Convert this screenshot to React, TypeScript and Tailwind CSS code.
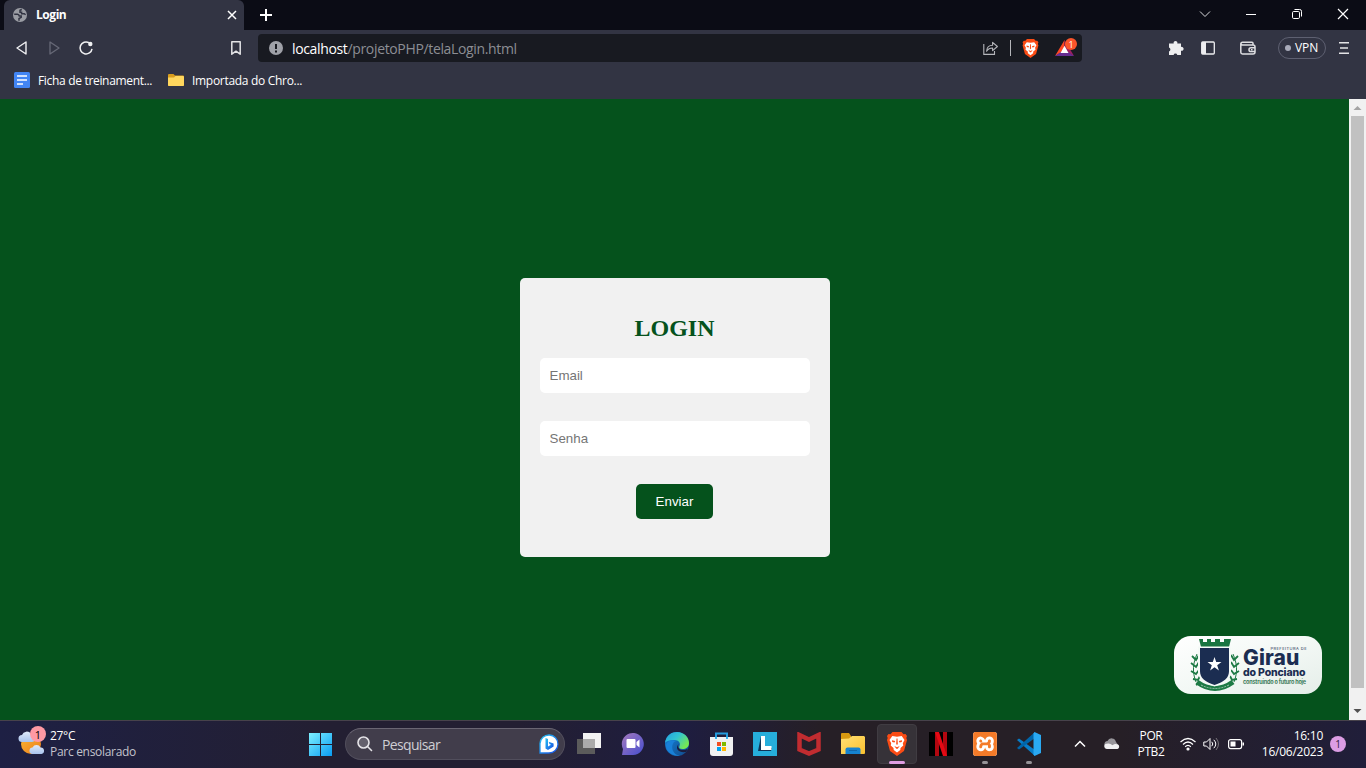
import React from "react";
import { SiXampp } from "react-icons/si";

type BoxProps = { children?: React.ReactNode; className?: string };

function Slot({ children, className = "" }: BoxProps) {
  return (
    <div className={`relative flex h-10 w-10 shrink-0 items-center justify-center ${className}`}>{children}</div>
  );
}

function BraveLogo({ className }: { className: string }) {
  return (
    <svg viewBox="0 0 24 24" className={`shrink-0 ${className}`}>
      <path d="M7.500 0h9l2 2.200 2-.1L22 4l-.7 2.100.7 2-3 11L12 24l-7-4.900-3-11 .7-2L2 4l1.500-1.900 2 .1z" fill="#fb4c15" />
      <path d="M7.300 4l4.700.7 4.700-.7 2.800 4-1.700 3.200.5 2.300-2.800 2.400-.2 2L12 20.500l-3.300-2.600-.2-2-2.800-2.400.5-2.300L4.500 8z" fill="#fff" />
      <path d="M7 8.300l3.200.8-.7 1.500-2.300-.6zM17 8.300l-3.200.8.7 1.500 2.300-.6zM11.500 6.500h1l.3 5.500-.8 1-.8-1zM9.300 14l2.700 1.300 2.700-1.300-2 2.700h-1.400z" fill="#fb4c15" />
    </svg>
  );
}

function TabStrip() {
  return (
    <div className="flex h-[30px] bg-[#0b0c15] pl-1">
      <div className="flex h-[30px] w-60 items-center rounded-t-md bg-[#323443] pl-[9px]">
        <svg className="h-[14px] w-[14px]" viewBox="0 0 14 14">
          <circle cx="7" cy="7" r="7" fill="#9a9ca3" />
          <path d="M1.200 6.300h3.200q1.600.2 1.900 1.700h1.900v1.300L6 10.500v2.200M8.800 1.500L7 2.300v2h1.600v1.400h2.700l1.300 1.100" fill="none" stroke="#323443" strokeWidth="1.500" />
        </svg>
        <span className="ml-[9px] w-[186px] text-xs font-bold tracking-[-0.45px] text-white">Login</span>
        <svg className="ml-1 h-5 w-3" viewBox="0 0 12 20">
          <path d="M2 6l8 8M10 6l-8 8" stroke="#fff" strokeWidth="1.5" />
        </svg>
      </div>
      <svg className="ml-[15px] h-[30px] w-[14px]" viewBox="0 0 14 30">
        <path d="M7 9v12M1 15h12" stroke="#fff" strokeWidth="2" />
      </svg>
      <div className="ml-auto flex">
        <svg className="h-[30px] w-[46px]" viewBox="0 0 46 30" fill="none" stroke="#d9d9dc">
          <path d="M18 11.500l5 5 5-5" />
        </svg>
        <svg className="h-[30px] w-[46px]" viewBox="0 0 46 30" stroke="#fff">
          <path d="M18 14.500h10" />
        </svg>
        <svg className="h-[30px] w-[46px]" viewBox="0 0 46 30" fill="none" stroke="#fff">
          <rect x="18.500" y="11.500" width="7" height="7" rx="1.200" />
          <path d="M20.500 9.500h5.200q1.800 0 1.800 1.800v5.200" />
        </svg>
        <svg className="h-[30px] w-[46px]" viewBox="0 0 46 30" stroke="#fff" strokeWidth="1.200">
          <path d="M18 9l10 10M28 9l-10 10" />
        </svg>
      </div>
    </div>
  );
}

function Toolbar() {
  return (
    <div className="flex h-9 items-center bg-[#323443] pl-[14px]">
      <svg className="h-4 w-4" viewBox="0 0 16 16" fill="none" stroke="#f0f0f2" strokeWidth="1.4" strokeLinejoin="round">
        <path d="M3 8l9-6v12z" />
      </svg>
      <svg className="ml-4 h-4 w-4" viewBox="0 0 16 16" fill="none" stroke="#676977" strokeWidth="1.3" strokeLinejoin="round">
        <path d="M13 8L4 2v12z" />
      </svg>
      <svg className="ml-4 h-4 w-4" viewBox="0 0 16 16" fill="none" stroke="#f0f0f2" strokeWidth="1.5">
        <path d="M11 2.700A6 6 0 1 0 14 8.800" />
        <circle cx="12.300" cy="4" r="2.200" fill="#f0f0f2" stroke="none" />
      </svg>
      <svg className="ml-[134px] h-4 w-4" viewBox="0 0 16 16" fill="none" stroke="#e3e3e6" strokeWidth="1.5" strokeLinejoin="round">
        <path d="M3.800 1.800h8.400v12.400L8 11.200l-4.200 3z" />
      </svg>
      <div className="ml-[14px] flex h-7 w-[824px] items-center rounded bg-[#181a21] pl-[11px]">
        <svg className="h-[14px] w-[14px]" viewBox="0 0 14 14">
          <circle cx="7" cy="7" r="7" fill="#9fa1a8" />
          <path d="M7 3v5M7 9.500v2" stroke="#181a21" strokeWidth="2" />
        </svg>
        <div className="ml-[9px] w-[691px] whitespace-nowrap text-[14px] tracking-[-0.35px] text-[#8c8e94]">
          <span className="text-white">localhost</span>/projetoPHP/telaLogin.html
        </div>
        <svg className="h-4 w-4" viewBox="0 0 16 16" fill="none" stroke="#b5b6bb" strokeWidth="1.100">
          <path d="M.8 4v10.400h10.700V11" />
          <path d="M3.600 11.200c.2-4 2.500-6 6-6V2.300l4.800 4.200-4.800 4.200V8C7 8 5 9 3.600 11.200z" strokeLinejoin="round" />
        </svg>
        <div className="ml-[11px] h-4 w-px bg-[#b5b6bb]" />
        <BraveLogo className="ml-[10px] h-[19px] w-[19px]" />
        <div className="relative ml-[15px] h-5 w-6">
          <svg className="mt-px h-[18px] w-[19px]" viewBox="0 0 19 18">
            <path d="M9.500 1L0 17l9.500-5.500z" fill="#ff4724" />
            <path d="M9.500 1L19 17l-9.500-5.500z" fill="#9e1f63" />
            <path d="M0 17h19l-9.500-6.500z" fill="#662d91" />
            <path d="M9.500 6.800l4 7.200h-8z" fill="#fff" />
          </svg>
          <div className="absolute left-[10px] top-0 flex h-3 w-3 items-center justify-center rounded-full bg-[#fb542b] text-[9px] leading-none text-white">1</div>
        </div>
      </div>
      <svg className="ml-[86px] h-4 w-4" viewBox="0 0 16 16">
        <path d="M2 3.500h3.700a1.900 1.900 0 1 1 3.600 0H13v3.400a2 2 0 1 1 0 3.800V15H9.300a1.900 1.900 0 0 0-3.700 0H1v-3.600a2 2 0 0 0 0-3.800V3.500z" fill="#eeeef0" />
      </svg>
      <svg className="ml-4 h-4 w-4" viewBox="0 0 16 16">
        <rect x="1.700" y="2" width="12.600" height="12" rx="1" fill="none" stroke="#ededf0" strokeWidth="1.300" />
        <path d="M2 2h4v12H2z" fill="#ededf0" />
      </svg>
      <svg className="ml-[24px] h-4 w-4" viewBox="0 0 16 16" fill="none" stroke="#dedee2" strokeWidth="1.500">
        <path d="M13 5V3.300q0-1-1-1H2.500Q.8 2.300.8 4v8.300q0 1.700 1.700 1.700H13q2 0 2-2V7q0-2-2-2H2.500Q1 5 1 3.500" />
        <path d="M15 7.800h-4q-2 0-2 1.900t2 1.900h4" />
        <path d="M11 9.700h1.500" />
      </svg>
      <div className="ml-[22px] flex h-[22px] w-12 items-center rounded-full border border-[#5e6071] pl-[6px]">
        <div className="h-[6px] w-[6px] shrink-0 rounded-full bg-[#a9abba]" />
        <span className="ml-1 text-xs tracking-[-0.1px] text-white">VPN</span>
      </div>
      <svg className="ml-[13px] h-4 w-[10px]" viewBox="0 0 10 16" stroke="#e3e3e6" strokeWidth="1.500">
        <path d="M0 2.750h10M1 8h8M0 13.250h10" />
      </svg>
    </div>
  );
}

function Bookmarks() {
  return (
    <div className="flex h-[33px] items-center bg-[#323443] pb-[5px] pl-[14px] text-xs text-white">
      <svg className="h-4 w-4" viewBox="0 0 16 16">
        <rect width="16" height="16" rx="1.500" fill="#4285f4" />
        <path d="M3 4h10M3 8h10M3 12h6" stroke="#fff" strokeWidth="1.700" />
      </svg>
      <span className="ml-2 w-[130px] whitespace-nowrap pt-px tracking-[-0.32px]">Ficha de treinament...</span>
      <svg className="h-4 w-4" viewBox="0 0 16 16">
        <path d="M0 3q0-1 1-1h4.500L7 3.500h8q1 0 1 1V13q0 1-1 1H1q-1 0-1-1z" fill="#d99d1d" />
        <path d="M0 5.500h6L7.500 4H15q1 0 1 1v8q0 1-1 1H1q-1 0-1-1z" fill="#ffd75e" />
      </svg>
      <span className="ml-2 whitespace-nowrap pt-px tracking-[-0.3px]">Importada do Chro...</span>
    </div>
  );
}

function CityLogo() {
  return (
    <div className="absolute bottom-[26px] right-[27px] flex h-[58px] w-[148px] overflow-hidden rounded-[17px] bg-linear-to-br from-white via-[#f3f8f5] to-[#e5eee9]">
      <svg className="ml-[16px] mt-[2px] h-[54px] w-[50px] shrink-0" viewBox="0 0 50 54">
        <g fill="none" stroke="#1d7a45" strokeWidth="1.700">
          <path d="M6 44C2 34 3 25 7 16M44 44c4-10 3-19-1-28" strokeWidth="1" />
          <path d="M2 18l4 4 3-5M1 25l5 4 3-5M1 33l5 3 3-4M3 41l5 1 2-4M6 47l4-2M48 18l-4 4-3-5M49 25l-5 4-3-5M49 33l-5 3-3-4M47 41l-5 1-2-4" strokeWidth="1.800" />
          <path d="M7 44q18 13 36 0" strokeWidth="5" />
          <path d="M11 47q14 7 28 0" stroke="#b8d4c3" strokeWidth=".8" strokeDasharray="2 1" />
        </g>
        <path d="M9 1h4v3h4V1h4v3h4V1h5v3h4V1h7l-2 8H11z" fill="#187540" />
        <path d="M8 8.500h33v25c0 8-6 12-16.500 15C14 45.500 8 41 8 33.500z" fill="#f5faf7" />
        <path d="M10 10h29v23c0 7-5 11-14.500 14C15 44 10 40 10 33z" fill="#1b2d51" />
        <path d="M24.500 19l1.700 5h5.300l-4.300 3.200 1.700 5.300-4.400-3.300-4.400 3.300 1.700-5.300-4.300-3.200h5.300z" fill="#fff" />
      </svg>
      <div className="ml-[3px] flex w-[66px] flex-col whitespace-nowrap font-['Inter',sans-serif] text-[#1b2d51]">
        <span className="mt-[11px] h-[4px] w-[64px] text-right text-[4px] leading-[4px] tracking-[0.45px]">PREFEITURA DE</span>
        <span className="-mt-[2px] h-[18px] text-[21px] font-extrabold leading-[18px] tracking-[0.1px]">Girau</span>
        <span className="h-[12px] text-[10.5px] font-extrabold leading-[12px] tracking-[-0.15px]">do Ponciano</span>
        <span className="h-[7px] text-[5.500px] font-bold leading-[7px] tracking-[-0.2px] text-[#3c7c5b]">construindo o futuro hoje</span>
      </div>
    </div>
  );
}

function LoginPage() {
  return (
    <div className="flex h-[621px]">
      <main className="relative flex w-[1349px] items-center justify-center bg-[#05521c]">
        <form className="mt-[15px] mr-[-1px] flex h-[279px] w-[310px] flex-col items-center rounded-[5px] bg-[#f1f1f1] px-5 pt-9">
          <h2 className="mr-px h-11 font-['Liberation_Serif',serif] text-2xl font-bold leading-7 text-[#05521c]">LOGIN</h2>
          <input placeholder="Email" className="h-[35px] w-full rounded-[5px] bg-white px-[9.500px] font-['Liberation_Sans',sans-serif] text-[13.333px] placeholder:text-[#757575]" />
          <input placeholder="Senha" className="mt-7 h-[35px] w-full rounded-[5px] bg-white px-[9.500px] font-['Liberation_Sans',sans-serif] text-[13.333px] placeholder:text-[#757575]" />
          <button type="button" className="mt-7 mr-px h-[35px] w-[77px] rounded-[5px] bg-[#05521c] pt-px font-['Liberation_Sans',sans-serif] text-[13.333px] text-white">Enviar</button>
        </form>
        <CityLogo />
      </main>
      <div className="flex w-[17px] flex-col items-center bg-[#f1f1f1]">
        <svg className="h-[17px] w-[17px]" viewBox="0 0 17 17"><path d="M8.500 7l4 4h-8z" fill="#a3a3a3" /></svg>
        <div className="h-[572px] w-[13px] bg-[#c1c1c1]" />
        <svg className="mt-[15px] h-[17px] w-[17px]" viewBox="0 0 17 17"><path d="M4.500 6h8l-4 4z" fill="#505050" /></svg>
      </div>
    </div>
  );
}

function Weather() {
  return (
    <div className="flex w-[300px] items-center pl-[18px]">
      <div className="relative h-8 w-7">
        <svg className="h-8 w-7" viewBox="0 0 28 32">
          <defs>
            <linearGradient id="sun" x2="1" y2="1"><stop stopColor="#f9b832" /><stop offset="1" stopColor="#ed7d1c" /></linearGradient>
            <linearGradient id="haze" x2="0" y2="1"><stop stopColor="#dfeafa" /><stop offset="1" stopColor="#a8c3ed" /></linearGradient>
          </defs>
          <circle cx="13" cy="16" r="10" fill="url(#sun)" />
          <path d="M4 14a3.500 3.500 0 0 1 0-7 5 5 0 0 1 9-1 4 4 0 0 1 1 8z" fill="url(#haze)" />
          <path d="M14 26a3.300 3.300 0 0 1 .5-6.500 4.500 4.500 0 0 1 8 0 3.300 3.300 0 0 1 1 6.500z" fill="url(#haze)" />
        </svg>
        <div className="absolute -top-[2px] left-3 flex h-4 w-4 items-center justify-center rounded-full bg-[#ff99a4] text-[11px] leading-none text-black">1</div>
      </div>
      <div className="ml-1 whitespace-nowrap text-[12px] leading-4 text-white">
        <div className="tracking-[-0.3px]">27°C</div>
        <div className="tracking-[-0.3px] text-[#c3c3cc]">Parc ensolarado</div>
      </div>
    </div>
  );
}

function SearchBox() {
  return (
    <div className="ml-[5px] mr-1 flex h-8 w-[220px] items-center rounded-full border border-[#514e5c] border-t-[#6a6673] bg-[#413d4b] pl-[11px]">
      <svg className="h-4 w-4 shrink-0" viewBox="0 0 16 16" fill="none" stroke="#e5e4e8" strokeWidth="1.600">
        <circle cx="6.500" cy="6.500" r="5.500" fill="#64616d" /><path d="M10.500 10.500l4 4" strokeLinecap="round" />
      </svg>
      <span className="ml-[9px] w-[157px] text-[14px] tracking-[-0.65px] text-[#cfced3]">Pesquisar</span>
      <svg className="h-5 w-5 shrink-0" viewBox="0 0 20 20">
        <defs><linearGradient id="bing" x2="1" y2="1"><stop stopColor="#25c2f1" /><stop offset="1" stopColor="#174de5" /></linearGradient></defs>
        <path d="M1 19V9.500A9 9 0 1 1 10 19z" fill="#fff" stroke="url(#bing)" strokeWidth="1.300" />
        <path d="M6.500 4l2.500 1v7.500l3-1.700-1.500-.7-.9-2.300 5 1.800v3L9 16l-2.500-1.500z" fill="url(#bing)" />
      </svg>
    </div>
  );
}

function PinnedApps() {
  return (
    <div className="flex gap-1">
      <Slot>
        <svg className="h-6 w-6" viewBox="0 0 24 24">
          <path d="M6 1h18v15H6z" fill="#f3f3f3" /><path d="M0 7h18v15H0z" fill="#5b5b5b" /><path d="M6 7h12v9H6z" fill="#ababab" />
        </svg>
      </Slot>
      <Slot>
        <svg className="h-6 w-6" viewBox="0 0 24 24">
          <defs><linearGradient id="chat" x2="1" y2="1"><stop stopColor="#a579bd" /><stop offset="1" stopColor="#454ed0" /></linearGradient></defs>
          <path d="M1 23l1-6A11 11 0 1 1 12 23z" fill="url(#chat)" />
          <rect x="5.500" y="7" width="9" height="9" rx="1" fill="#fff" /><path d="M15.500 10l3-2.500v8l-3-2.500z" fill="#fff" />
        </svg>
      </Slot>
      <Slot>
        <svg className="h-6 w-6" viewBox="0 0 24 24">
          <defs>
            <linearGradient id="edge" x2="1" y2=".6"><stop stopColor="#249fe0" /><stop offset=".5" stopColor="#31c3d3" /><stop offset="1" stopColor="#76e852" /></linearGradient>
            <linearGradient id="sea" x2="1" y2="1"><stop stopColor="#1684d8" /><stop offset="1" stopColor="#114a8c" /></linearGradient>
          </defs>
          <circle cx="12" cy="12" r="12" fill="url(#sea)" />
          <path d="M0 11C1 3 7 0 12 0c7 0 12 5 12 11 0 4-3 6-6.500 6-3 0-4-1-3-3 1.500-3-1-6-5-6C5 8 1 9 0 11z" fill="url(#edge)" />
          <path d="M9 10c-4 5-1 13 6 13.500C7 25 1 19 1 14c0-4 5-7 10-5z" fill="#1980d8" />
          <path d="M13.500 12c-1.500 4 1.500 6 4.500 6 2.500 0 4-.7 5-1.500L21 20c-7 1-11.500-3-7.500-8z" fill="#1b1d3d" />
        </svg>
      </Slot>
      <Slot>
        <svg className="h-6 w-6" viewBox="0 0 24 24">
          <path d="M7 7V1.500h11V7" fill="none" stroke="#249bdd" strokeWidth="2" />
          <path d="M1 5h23v16q0 3-3 3H4q-3 0-3-3z" fill="#f0f1f2" />
          <path d="M7 5V3.500M18 5V3.500" stroke="#249bdd" strokeWidth="2" /><path d="M6 5h2v2H6zM17 5h2v2h-2z" fill="#36b4ef" />
          <path d="M8 10h4v4H8z" fill="#f25022" /><path d="M13 10h4v4h-4z" fill="#7fba00" />
          <path d="M8 15h4v4H8z" fill="#00a4ef" /><path d="M13 15h4v4h-4z" fill="#ffb900" />
        </svg>
      </Slot>
      <Slot>
        <svg className="h-6 w-6" viewBox="0 0 24 24">
          <path d="M0 0h24v24H0z" fill="#26aedb" /><path d="M8 4l-3 15h13l1-3H9z" fill="#0f3557" /><path d="M8 4h4v10h6.500v4H8z" fill="#fff" />
        </svg>
      </Slot>
      <Slot>
        <svg className="h-6 w-6" viewBox="0 0 24 24">
          <path d="M2.500 3L12 7.500 21.500 3v14.500L12 21.500l-9.500-4z" fill="none" stroke="#c12c30" strokeWidth="4.500" />
        </svg>
      </Slot>
      <Slot>
        <svg className="h-6 w-6" viewBox="0 0 24 24">
          <defs><linearGradient id="folder" x2="1" y2="1"><stop stopColor="#ffe075" /><stop offset="1" stopColor="#fac02e" /></linearGradient></defs>
          <path d="M0 2q0-1 1-1h7l2 3v5H0z" fill="#d89910" /><path d="M0 7l8-.5L11 4h12l1 1v16q0 1-1 1H0z" fill="url(#folder)" />
          <path d="M4.500 22v-4.500q0-2 2-2h11q2 0 2 2V22z" fill="#1683d0" /><path d="M8 18.500h8" stroke="#1267aa" />
        </svg>
      </Slot>
      <Slot className="rounded border border-[#403c42] bg-[#363238]">
        <BraveLogo className="h-6 w-6" />
        <div className="absolute -bottom-px h-[3px] w-4 rounded-full bg-[#df9ee3]" />
      </Slot>
      <Slot>
        <svg className="h-6 w-6" viewBox="0 0 24 24">
          <path d="M0 0h24v24H0z" fill="#000" /><path d="M6 0h4v24H6zM14 0h4v24h-4z" fill="#b20710" /><path d="M6 0h4l8 24h-4z" fill="#e50914" />
        </svg>
      </Slot>
      <Slot>
        <div className="h-6 w-6 rounded-[3px] bg-white"><SiXampp className="h-6 w-6 text-[#f47b29]" /></div>
        <div className="absolute bottom-0 h-[3px] w-[6px] rounded-full bg-[#969397]" />
      </Slot>
      <Slot>
        <svg className="h-6 w-6" viewBox="0 0 24 24">
          <path d="M0 8l2-1.500L18 18v6z" fill="#087dc8" /><path d="M0 16l2 1.500L18 6V0z" fill="#0065a9" /><path d="M17.500 0L24 3v18l-6.500 3-1-1.500v-21z" fill="#2aa9f2" />
        </svg>
        <div className="absolute bottom-0 h-[3px] w-[6px] rounded-full bg-[#969397]" />
      </Slot>
    </div>
  );
}

function Tray() {
  return (
    <div className="ml-[23px] flex items-center text-[12px] text-white">
      <svg className="h-4 w-4" viewBox="0 0 16 16" fill="none" stroke="#fff" strokeWidth="1.500"><path d="M3 10.500L8 5.500l5 5" /></svg>
      <svg className="ml-4 h-4 w-4" viewBox="0 0 16 16">
        <path d="M.5 9a3.500 3.500 0 0 1 3-4A4.500 4.500 0 0 1 12 6l2.500 3.500L7 12z" fill="#97959a" />
        <path d="M3 13a2.600 2.600 0 0 1-.3-5.200Q6 7 8.500 9.300 11 7 14 8.500a2.500 2.500 0 0 1-.5 4.500z" fill="#f1f1f2" />
      </svg>
      <div className="ml-[11px] w-10 text-center leading-4 tracking-[-0.4px]"><div>POR</div><div>PTB2</div></div>
      <svg className="ml-[9px] h-4 w-4" viewBox="0 0 16 16" fill="none" stroke="#fff" strokeWidth="1.200">
        <path d="M.5 6q7.500-7 15 0M3 8.500q5-5 10 0M5.200 10.800q2.800-2.700 5.600 0" /><circle cx="8" cy="13" r="1" fill="#fff" />
      </svg>
      <svg className="ml-[7px] h-4 w-4" viewBox="0 0 16 16" fill="none" stroke="#fff" strokeLinejoin="round">
        <path d="M.8 6h2.700L7 2.500v11L3.500 10H.8zM8.800 5.800q2 2.200 0 4.400M10.800 3.800q4 4.200 0 8.400" /><path d="M13 2q5 6 0 12" stroke="#777379" />
      </svg>
      <svg className="ml-[9px] h-4 w-[17px]" viewBox="0 0 17 16">
        <rect x=".6" y="3.600" width="13" height="9" rx="2" fill="none" stroke="#fff" strokeWidth="1.200" /><path d="M2.500 5.500h5v5h-5zM14.500 6.500h1.500v3h-1.500z" fill="#fff" />
      </svg>
      <div className="ml-[8px] w-[70px] whitespace-nowrap text-right leading-4 tracking-[-0.25px]"><div>16:10</div><div>16/06/2023</div></div>
      <div className="ml-[7px] flex h-4 w-4 items-center justify-center rounded-full bg-[#dc9de4] text-[10px] text-[#32213a]">1</div>
    </div>
  );
}

export default function App() {
  return (
    <div className="h-[768px] w-[1366px] overflow-hidden bg-[#05521c] font-['Open_Sans','Noto_Sans',sans-serif]">
      <TabStrip />
      <Toolbar />
      <Bookmarks />
      <LoginPage />
      <footer className="flex h-12 items-center border-t border-[#47424b] bg-[linear-gradient(90deg,#1e2044_0%,#231f32_24%,#231f32_38%,#1e1d40_50%,#261f26_60%,#261f26_82%,#201e3a_100%)] pb-px">
        <Weather />
        <Slot>
          <svg className="h-6 w-6" viewBox="0 0 24 24">
            <defs><linearGradient id="windows" gradientUnits="userSpaceOnUse" x1="1" y1="1" x2="24" y2="24"><stop stopColor="#7ef0ff" /><stop offset="1" stopColor="#099cf3" /></linearGradient></defs>
            <path d="M1 1h11v11H1zM13 1h11v11H13zM1 13h11v11H1zM13 13h11v11H13z" fill="url(#windows)" />
          </svg>
        </Slot>
        <SearchBox />
        <PinnedApps />
        <Tray />
      </footer>
    </div>
  );
}
